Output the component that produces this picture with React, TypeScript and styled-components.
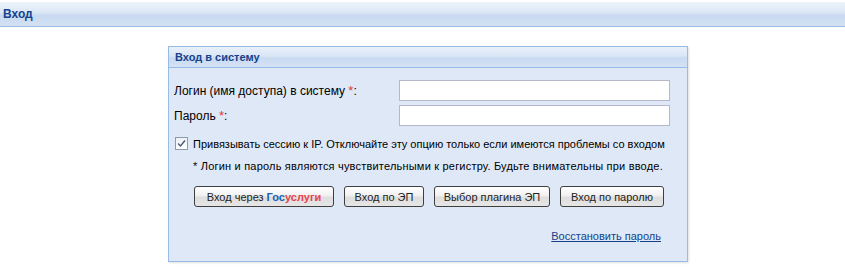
import React from 'react';
import styled, { createGlobalStyle } from 'styled-components';

const GlobalStyle = createGlobalStyle`
  body {
    margin: 0;
    background: #ffffff;
    font-family: "Liberation Sans", Arial, sans-serif;
    font-size: 12px;
    color: #000;
  }
`;

const Page = styled.div`
  width: 845px;
  height: 278px;
  overflow: hidden;
  background: #fff;
`;

const TopBar = styled.div`
  height: 24px;
  margin-top: 2px;
  padding-left: 3px;
  display: flex;
  align-items: center;
  background: linear-gradient(to bottom, #edf3fb 0%, #dbe6f5 45%, #c8d9f0 55%, #d3e1f3 100%);
  border-bottom: 1px solid #99bbe8;
  color: #15428b;
  font-weight: bold;
  font-size: 12px;
`;

const Panel = styled.div`
  width: 518px;
  margin: 19px 0 0 168px;
  border: 1px solid #99bbe8;
  box-shadow: 1px 1px 2px rgba(0, 0, 0, 0.12);
`;

const PanelHeader = styled.div`
  height: 20px;
  padding-left: 6px;
  display: flex;
  align-items: center;
  background: linear-gradient(to bottom, #e9f0fa 0%, #dae6f6 45%, #c9daf1 55%, #d4e2f4 100%);
  border-bottom: 1px solid #99bbe8;
  color: #15428b;
  font-weight: bold;
  font-size: 11px;
`;

const PanelBody = styled.div`
  background: #dfe8f6;
  padding: 12px 16px 0 5px;
  height: 181px;
`;

const FieldRow = styled.div`
  display: flex;
  align-items: center;
  height: 21px;
  margin-bottom: 4px;
`;

const Label = styled.label`
  width: 225px;
  font-size: 12px;
`;

const Star = styled.span`
  color: #e03c3c;
  font-size: 13px;
`;

const Input = styled.input`
  width: 271px;
  height: 21px;
  box-sizing: border-box;
  border: 1px solid #b5b8c8;
  background: #fff;
  padding: 1px 3px;
  outline: none;
`;

const CheckRow = styled.div`
  display: flex;
  align-items: center;
  margin-top: 11px;
  gap: 5px;
  padding-left: 1px;
  font-size: 11px;
  white-space: nowrap;
`;

const Box = styled.span`
  width: 11px;
  height: 11px;
  border: 1px solid #8e9aaa;
  background: linear-gradient(to bottom, #eef2f7, #ffffff);
  display: flex;
  align-items: center;
  justify-content: center;
`;

const Note = styled.div`
  margin-top: 10px;
  padding-left: 19px;
  font-size: 11px;
  letter-spacing: 0.2px;
  white-space: nowrap;
`;

const Buttons = styled.div`
  display: flex;
  gap: 10px;
  margin-top: 14px;
  padding-left: 20px;
`;

const Button = styled.button<{ $w: number }>`
  width: ${(p) => p.$w}px;
  height: 21px;
  border: 1px solid #3f3f3f;
  border-radius: 3px;
  background: linear-gradient(to bottom, #ffffff 0%, #f0f0f0 45%, #dedede 55%, #e6e6e6 100%);
  font-family: "Liberation Sans", Arial, sans-serif;
  font-size: 11px;
  color: #222;
  padding: 0;
  cursor: pointer;
`;

const Gos = styled.span`
  color: #1b5fb8;
  font-weight: bold;
`;

const Uslugi = styled.span`
  color: #e8434f;
  font-weight: bold;
`;

const LinkRow = styled.div`
  display: flex;
  justify-content: flex-end;
  margin-top: 23px;
  padding-right: 10px;
`;

const RestoreLink = styled.a`
  color: #15428b;
  text-decoration: underline;
  font-size: 11px;
  cursor: pointer;
`;

export default function App() {
  return (
    <Page>
      <GlobalStyle />
      <TopBar>Вход</TopBar>
      <Panel>
        <PanelHeader>Вход в систему</PanelHeader>
        <PanelBody>
          <FieldRow>
            <Label>
              Логин (имя доступа) в систему <Star>*</Star>:
            </Label>
            <Input />
          </FieldRow>
          <FieldRow>
            <Label>
              Пароль <Star>*</Star>:
            </Label>
            <Input type="password" />
          </FieldRow>
          <CheckRow>
            <Box>
              <svg width="9" height="9" viewBox="0 0 9 9">
                <path d="M1 4.5 L3.5 7 L8 1.5" fill="none" stroke="#4a5a73" strokeWidth="1.4" />
              </svg>
            </Box>
            <span>Привязывать сессию к IP. Отключайте эту опцию только если имеются проблемы со входом</span>
          </CheckRow>
          <Note>* Логин и пароль являются чувствительными к регистру. Будьте внимательны при вводе.</Note>
          <Buttons>
            <Button $w={140}>
              Вход через <Gos>Гос</Gos>
              <Uslugi>услуги</Uslugi>
            </Button>
            <Button $w={80}>Вход по ЭП</Button>
            <Button $w={116}>Выбор плагина ЭП</Button>
            <Button $w={104}>Вход по паролю</Button>
          </Buttons>
          <LinkRow>
            <RestoreLink>Восстановить пароль</RestoreLink>
          </LinkRow>
        </PanelBody>
      </Panel>
    </Page>
  );
}
